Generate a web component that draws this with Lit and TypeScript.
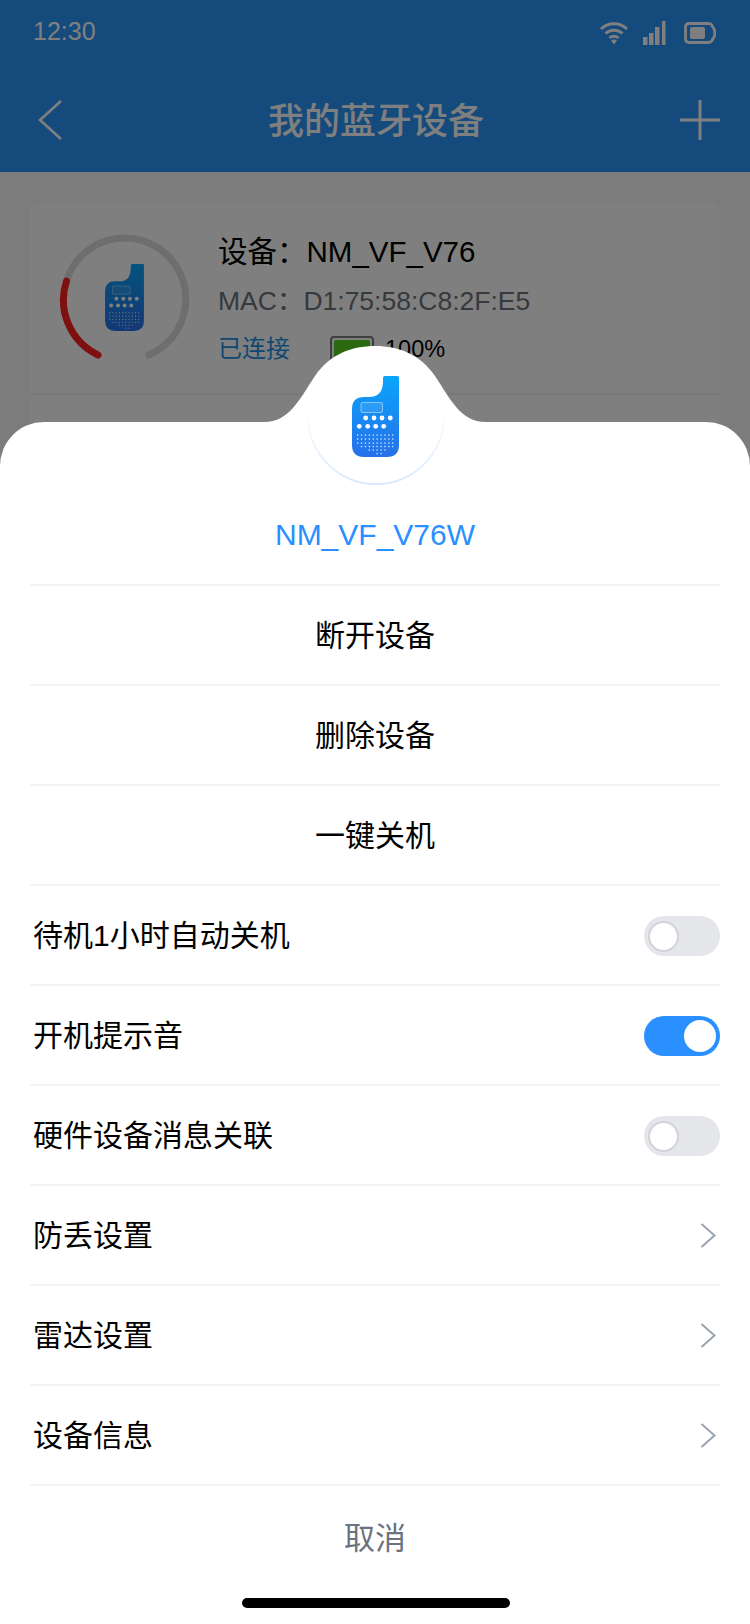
import { LitElement, html, css, svg } from "lit";
import { customElement } from "lit/decorators.js";

const gridRows: [number, number, number][] = [
  [59, 0, 9], [63, 0, 9], [67, 0, 9], [70.5, 1, 9], [74, 3, 7], [77.5, 5, 6],
];

function deviceIcon(cls: string) {
  const dots1 = [13.7, 22, 30, 38.3];
  const dots2 = [7.3, 15.7, 23.7, 31.7];
  const grid: unknown[] = [];
  for (const [y, a, b] of gridRows) {
    for (let i = a; i <= b; i++) {
      grid.push(svg`<rect x=${5 + i * 3.9} y=${y - 0.6} width="1.3" height="1.3" fill="#fff" opacity=".85"></rect>`);
    }
  }
  return html`<svg class=${cls} viewBox="0 0 47 81">
    <defs>
      <linearGradient id="devGrad" x1="0" y1="0" x2="0" y2="1">
        <stop offset="0" stop-color="#0aa5fb"></stop>
        <stop offset="1" stop-color="#2670ea"></stop>
      </linearGradient>
    </defs>
    <path d="M31 2 Q31 0 33 0 H45.5 Q47 0 47 1.5 V69 Q47 81 35 81 H12 Q0 81 0 69 V33 Q0 21 12 21 H17 Q31 21 31 5 Z" fill="url(#devGrad)"></path>
    <rect x="9" y="26.5" width="21.5" height="10" rx="1.5" fill="#fff" fill-opacity=".1" stroke="#fff" stroke-opacity=".45" stroke-width="1"></rect>
    ${dots1.map((x) => svg`<circle cx=${x} cy="42" r="2.4" fill="#fff"></circle>`)}
    ${dots2.map((x) => svg`<circle cx=${x} cy="50.3" r="2.4" fill="#fff"></circle>`)}
    ${grid}
  </svg>`;
}

const chevron = html`<svg class="chev" viewBox="0 0 16 25"><path d="M1.5 1 L14.5 12.5 L1.5 24" fill="none" stroke="#9aa3b1" stroke-width="2"></path></svg>`;

type Row =
  | { t: "action"; label: string }
  | { t: "toggle"; label: string; on: boolean }
  | { t: "link"; label: string };

const rows: Row[] = [
  { t: "action", label: "断开设备" },
  { t: "action", label: "删除设备" },
  { t: "action", label: "一键关机" },
  { t: "toggle", label: "待机1小时自动关机", on: false },
  { t: "toggle", label: "开机提示音", on: true },
  { t: "toggle", label: "硬件设备消息关联", on: false },
  { t: "link", label: "防丢设置" },
  { t: "link", label: "雷达设置" },
  { t: "link", label: "设备信息" },
];

@customElement("app-root")
export class AppRoot extends LitElement {
  static styles = css`
    :host {
      display: block;
      position: relative;
      width: 750px;
      height: 1624px;
      overflow: hidden;
      background: #f8f8f8;
      font-family: "Liberation Sans", "Noto Sans CJK SC", sans-serif;
      color: #000;
    }
    .header { background: #2a94fa; color: #fff; height: 172px; display: flex; flex-direction: column; }
    .status { height: 68px; padding: 0 34px 6px 33px; box-sizing: border-box; display: flex; align-items: center; justify-content: space-between; }
    .time { font-size: 25px; }
    .status-icons { display: flex; align-items: center; gap: 14px; margin-top: 3px; }
    .status-icons svg { display: block; }
    .status-icons .batt-icon { margin-left: 4px; }
    .nav { flex: 1; display: flex; align-items: center; justify-content: space-between; padding: 0 30px 0 38px; }
    .nav svg { display: block; }
    .title { font-size: 36px; font-weight: 500; margin: -4px 0 0 10px; }
    .card { margin: 31px 30px 0; background: #fff; border-radius: 10px; height: 700px; }
    .card-top { height: 190px; border-bottom: 2px solid #f0f0f0; padding: 0 0 0 26px; display: flex; align-items: flex-start; }
    .ring { position: relative; width: 136px; height: 136px; margin-top: 28px; flex: none; display: flex; align-items: center; justify-content: center; }
    .ring svg.arc { position: absolute; inset: 0; width: 136px; height: 136px; }
    .small-dev { width: 39px; height: 67px; display: block; position: relative; margin-top: -4px; }
    .info { margin-left: 26px; padding-top: 29px; }
    .name { font-size: 29.5px; line-height: 40px; }
    .mac { font-size: 26.5px; line-height: 36px; color: #6c727c; margin-top: 11px; }
    .state { display: flex; align-items: center; font-size: 24px; line-height: 34px; margin-top: 13px; }
    .connected { color: #2090e8; width: 112px; }
    .batt { width: 44px; height: 26px; box-sizing: border-box; border: 2px solid #7c7c7c; border-radius: 4px; padding: 2px; margin-right: 11px; }
    .batt i { display: block; height: 100%; background: #56d020; border-radius: 2px; }
    .pct { font-size: 23.5px; }

    .overlay { position: absolute; inset: 0; background: rgba(0, 0, 0, .5); display: flex; flex-direction: column; justify-content: flex-end; }
    .sheet { position: relative; background: #fff; border-radius: 44px 44px 0 0; height: 1202px; box-sizing: border-box; padding: 0 30px; }
    .bump { position: absolute; left: 260px; top: -76px; width: 230px; height: 77px; display: block; }
    .head { height: 162px; display: flex; flex-direction: column; align-items: center; }
    .hero { position: relative; width: 138px; height: 138px; margin: -75px 0 0 2px; display: flex; align-items: center; justify-content: center; flex: none; }
    .hero svg.halo { position: absolute; inset: 0; width: 138px; height: 138px; }
    .big-dev { width: 47px; height: 81px; display: block; position: relative; margin-left: -2px; }
    .device-name { font-size: 30px; line-height: 40px; color: #2a8fff; margin-top: 30px; }
    .row { height: 100px; box-sizing: border-box; border-top: 2px solid #f4f4f6; display: flex; align-items: center; font-size: 30px; justify-content: space-between; padding-left: 3px; }
    .row span { margin-top: -4px; }
    .row.action { justify-content: center; padding-left: 0; }
    .chev { width: 16px; height: 25px; margin-right: 4px; display: block; }
    .switch { width: 76px; height: 40px; border-radius: 20px; background: #e5e6ea; display: flex; align-items: center; padding: 0 4px; box-sizing: border-box; margin-top: 2px; }
    .switch .knob { width: 31px; height: 31px; border-radius: 50%; background: #fff; border: 2px solid #d2d3d8; box-sizing: border-box; }
    .switch.on { background: #2a8fff; justify-content: flex-end; }
    .switch.on .knob { width: 32px; height: 32px; border: 0; }
    .cancel { height: 104px; box-sizing: border-box; border-top: 2px solid #f4f4f6; display: flex; align-items: center; justify-content: center; font-size: 31px; color: #6b7280; padding-bottom: 4px; }
    .home { position: absolute; left: 242px; bottom: 16px; width: 268px; height: 10px; border-radius: 5px; background: #000; }
  `;

  renderRow(r: Row) {
    if (r.t === "action") return html`<div class="row action"><span>${r.label}</span></div>`;
    if (r.t === "toggle")
      return html`<div class="row"><span>${r.label}</span><div class="switch ${r.on ? "on" : ""}"><div class="knob"></div></div></div>`;
    return html`<div class="row"><span>${r.label}</span>${chevron}</div>`;
  }

  render() {
    return html`
      <div class="header">
        <div class="status">
          <span class="time">12:30</span>
          <div class="status-icons">
            <svg width="30" height="24" viewBox="0 0 30 24" fill="none" stroke="#fff">
              <path d="M2 8 C9 1 21 1 28 8" stroke-width="3"></path>
              <path d="M6.5 12.5 C11 8 19 8 23.5 12.5" stroke-width="3"></path>
              <path d="M10.5 17 C13 14.5 17 14.5 19.5 17" stroke-width="3"></path>
              <path d="M15 23.5 L12 19.5 C14 18.3 16 18.3 18 19.5 Z" fill="#fff" stroke="none"></path>
            </svg>
            <svg width="23" height="24" viewBox="0 0 23 24" fill="#fff">
              <rect x="0" y="16" width="4.5" height="8"></rect>
              <rect x="6" y="12" width="4.5" height="12"></rect>
              <rect x="12" y="6" width="4.5" height="18"></rect>
              <rect x="19" y="0" width="3.5" height="24"></rect>
            </svg>
            <svg class="batt-icon" width="32" height="22" viewBox="0 0 32 22">
              <path d="M5 1.5 H25 Q27 1.5 28 3.5 L30.5 8 Q31 11 30.5 14 L28 18.5 Q27 20.5 25 20.5 H5 Q1.5 20.5 1.5 17 V5 Q1.5 1.5 5 1.5 Z" fill="none" stroke="#fff" stroke-width="2.8"></path>
              <rect x="6" y="5" width="15" height="12" rx="2" fill="#fff"></rect>
            </svg>
          </div>
        </div>
        <div class="nav">
          <svg width="24" height="40" viewBox="0 0 24 40"><path d="M23 1 L2 20 L23 39" fill="none" stroke="#fff" stroke-width="2.6"></path></svg>
          <span class="title">我的蓝牙设备</span>
          <svg width="40" height="40" viewBox="0 0 40 40"><path d="M20 0 V40 M0 20 H40" fill="none" stroke="#fff" stroke-width="3"></path></svg>
        </div>
      </div>
      <div class="card">
        <div class="card-top">
          <div class="ring">
            <svg class="arc" viewBox="0 0 136 136" fill="none" stroke-width="7" stroke-linecap="round">
              <path d="M10.5 50 A61 61 0 1 1 93 124" stroke="#dcdcdc"></path>
              <path d="M10.5 50 A61 61 0 0 0 42 124" stroke="#ff2020"></path>
            </svg>
            ${deviceIcon("small-dev")}
          </div>
          <div class="info">
            <div class="name">设备：NM_VF_V76</div>
            <div class="mac">MAC：D1:75:58:C8:2F:E5</div>
            <div class="state">
              <span class="connected">已连接</span>
              <div class="batt"><i></i></div>
              <span class="pct">100%</span>
            </div>
          </div>
        </div>
      </div>
      <div class="overlay">
        <div class="sheet">
          <svg class="bump" viewBox="0 0 230 77">
            <path d="M4 76 C30 76 40 52 55 30 C70 8 92 0 115 0 C138 0 160 8 175 30 C190 52 200 76 226 76 V77 H4 Z" fill="#fff"></path>
          </svg>
          <div class="head">
            <div class="hero">
              <svg class="halo" viewBox="0 0 138 138" fill="none">
                <defs>
                  <linearGradient id="haloGrad" x1="0" y1="0" x2="0" y2="1">
                    <stop offset=".45" stop-color="#dbe9fc" stop-opacity="0"></stop>
                    <stop offset="1" stop-color="#d8e8fd"></stop>
                  </linearGradient>
                </defs>
                <circle cx="69" cy="69" r="68" stroke="url(#haloGrad)" stroke-width="2"></circle>
              </svg>
              ${deviceIcon("big-dev")}
            </div>
            <div class="device-name">NM_VF_V76W</div>
          </div>
          ${rows.map((r) => this.renderRow(r))}
          <div class="cancel">取消</div>
          <div class="home"></div>
        </div>
      </div>
    `;
  }
}
